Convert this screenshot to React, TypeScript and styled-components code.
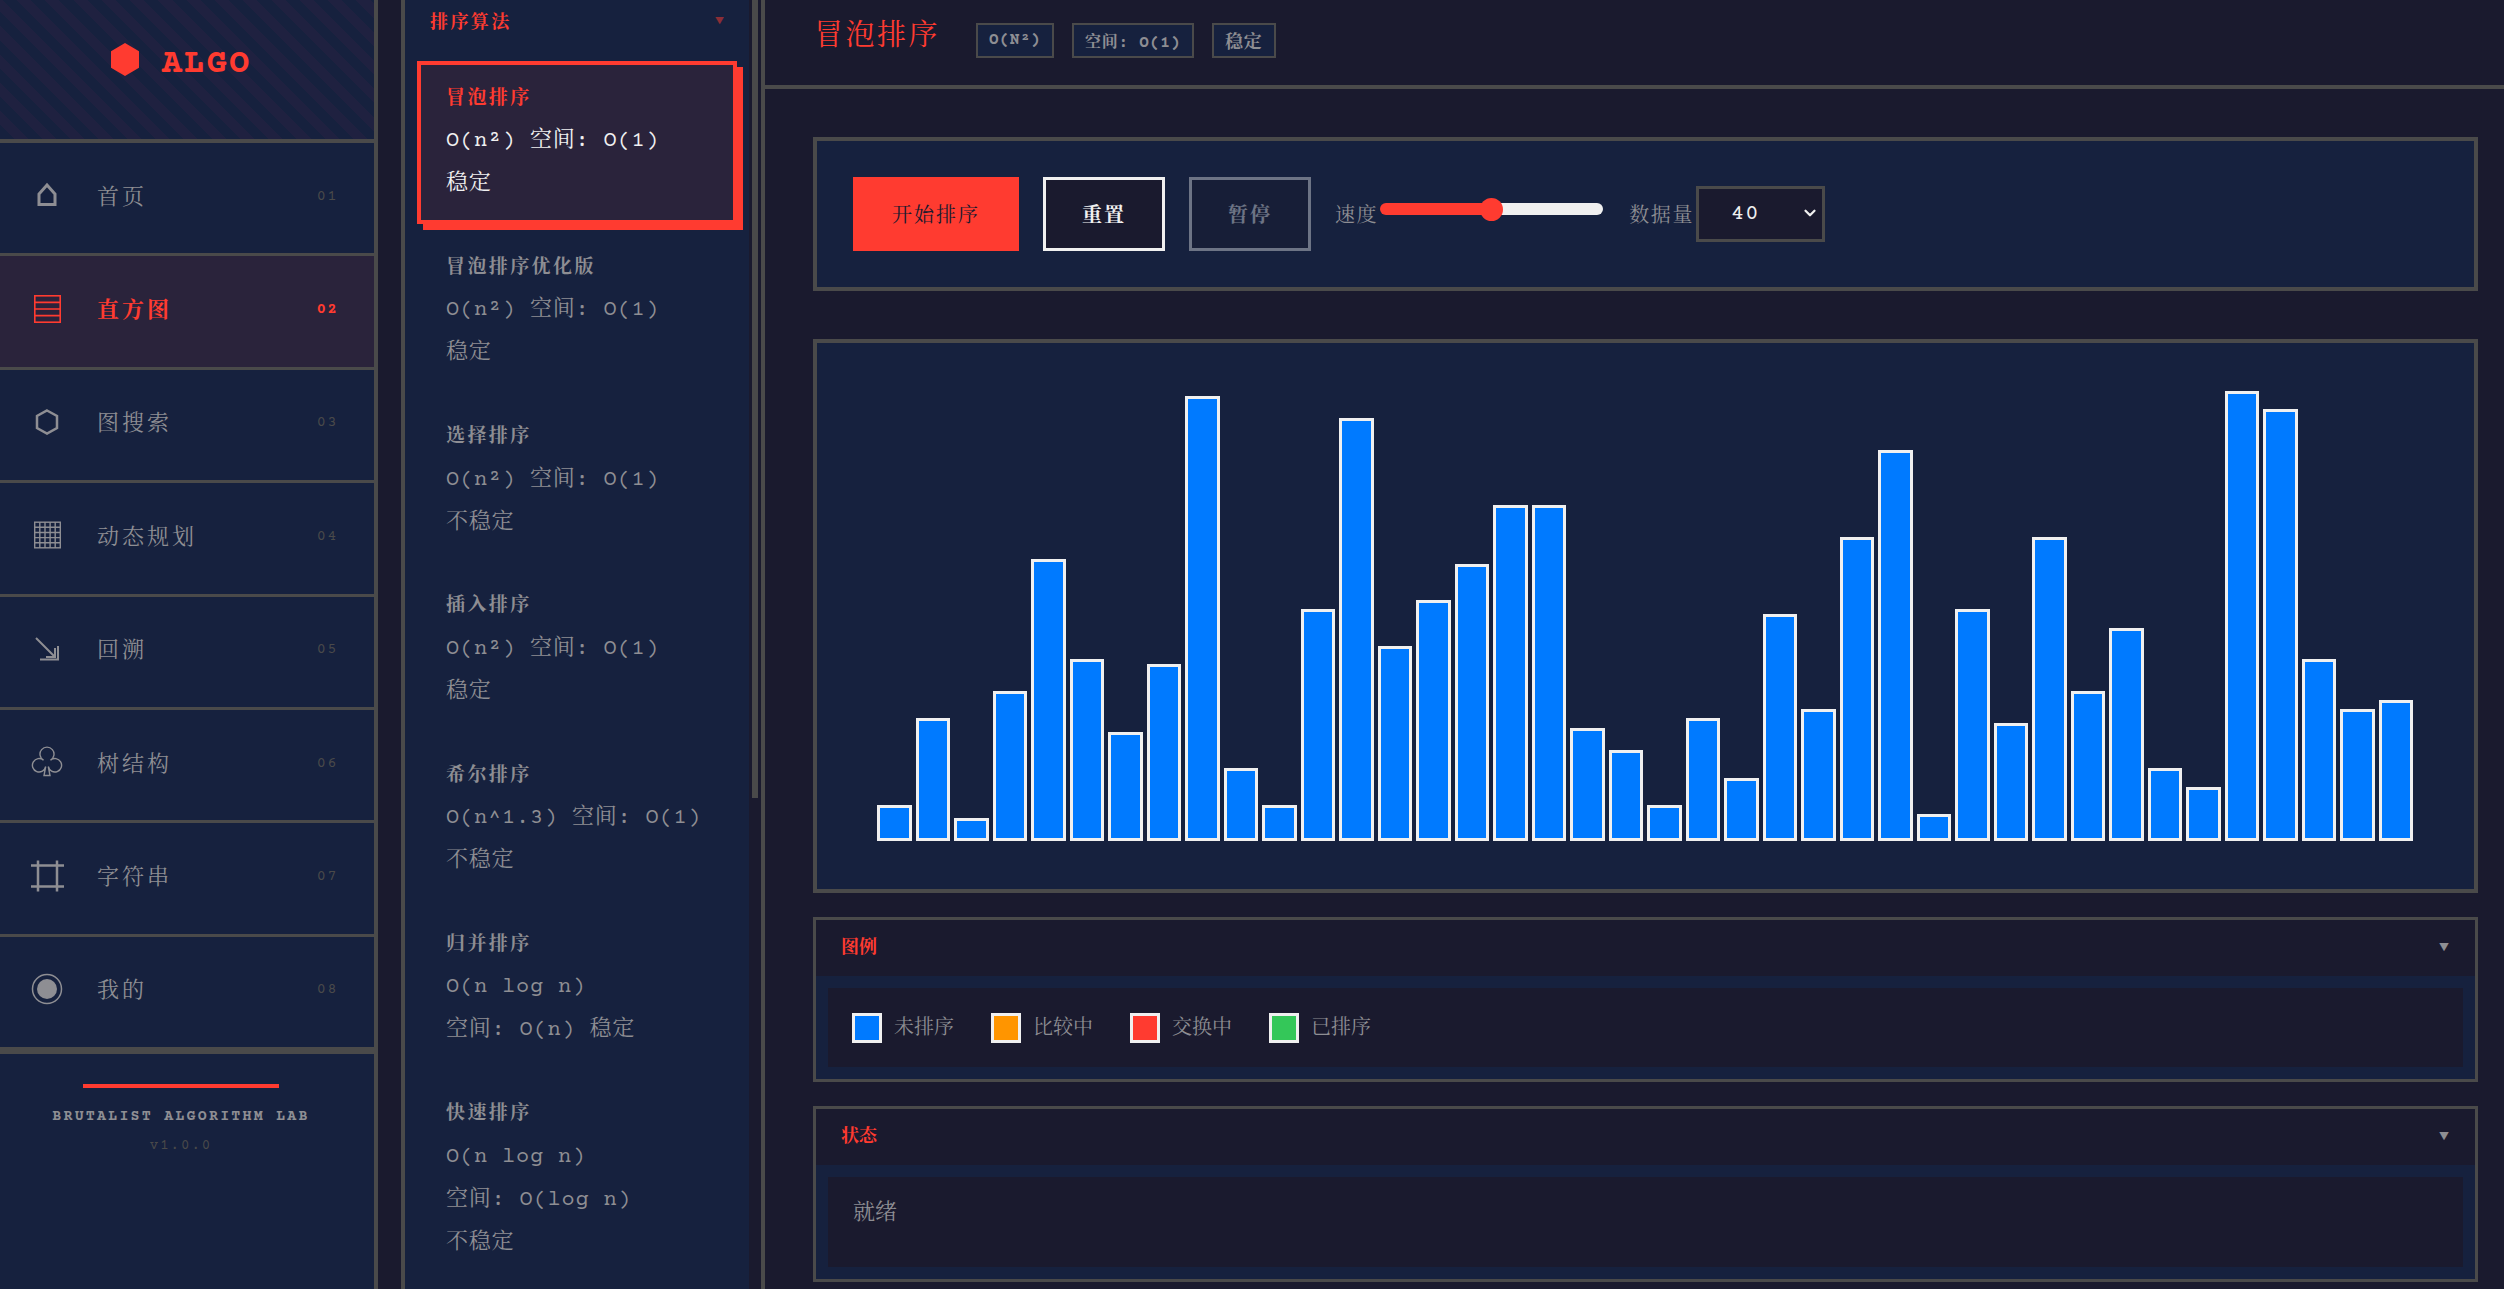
import React from "react";
import styled, { createGlobalStyle } from "styled-components";
import { ChevronDown } from "lucide-react";

const RED = "#ff3b30";
const NAVY = "#16213e";
const DARK = "#1a1a2e";
const LINE = "#4a4a4a";
const GRAY = "#8e8e93";
const WHITE = "#f0f0f0";

const GlobalStyle = createGlobalStyle`
  html, body {
    margin: 0;
    height: 100%;
    overflow: hidden;
    background: ${DARK};
  }
  * {
    box-sizing: border-box;
  }
`;

const Page = styled.div`
  display: flex;
  height: 100vh;
  font-family: "Courier Prime", "Noto Serif CJK SC", monospace;
  color: ${WHITE};
  background: ${DARK};
`;

const Sidebar = styled.aside`
  width: 378px;
  flex-shrink: 0;
  display: flex;
  flex-direction: column;
  background: ${NAVY};
  border-right: 4px solid ${LINE};
`;

const LogoBox = styled.div`
  height: 143px;
  padding: 0 12px 10px 0;
  display: flex;
  align-items: center;
  justify-content: center;
  gap: 23px;
  border-bottom: 4px solid ${LINE};
  background: repeating-linear-gradient(
    45deg,
    ${NAVY},
    ${NAVY} 10px,
    #1f2140 10px,
    #1f2140 20px
  );
`;

const LogoMark = styled.svg`
  width: 28px;
  height: 33px;
  margin-top: -10px;
  fill: ${RED};
`;

const LogoText = styled.span`
  font-size: 34px;
  font-weight: 700;
  letter-spacing: 2px;
  color: ${RED};
`;

const NavList = styled.nav`
  display: flex;
  flex-direction: column;
`;

const NavItem = styled.a<{ $active?: boolean }>`
  height: 113.4px;
  display: flex;
  align-items: center;
  padding: 0 36px 6px 24px;
  border-bottom: 3px solid ${LINE};
  color: ${(p) => (p.$active ? RED : GRAY)};
  background: ${(p) => (p.$active ? "#2a233b" : "transparent")};
  font-weight: ${(p) => (p.$active ? 700 : 400)};
  cursor: pointer;
`;

const NavGlyph = styled.svg`
  width: 46px;
  height: 46px;
  margin-right: 27px;
  flex-shrink: 0;
  fill: none;
  stroke: currentColor;
`;

const NavLabel = styled.span`
  flex: 1;
  font-size: 22px;
  letter-spacing: 3px;
`;

const NavNumber = styled.span<{ $active?: boolean }>`
  margin-top: 2px;
  font-size: 15px;
  letter-spacing: 1.6px;
  color: ${(p) => (p.$active ? RED : LINE)};
`;

const SideFooter = styled.div`
  flex: 1;
  padding: 30px 36px 0 24px;
  display: flex;
  flex-direction: column;
  align-items: center;
  border-top: 4px solid ${LINE};
`;

const FooterBar = styled.div`
  width: 196px;
  height: 4px;
  background: ${RED};
  margin-bottom: 20px;
`;

const FooterTitle = styled.div`
  font-size: 15px;
  font-weight: 700;
  letter-spacing: 2.2px;
  white-space: nowrap;
  color: ${GRAY};
  margin-bottom: 13px;
`;

const FooterVersion = styled.div`
  font-size: 14px;
  letter-spacing: 2px;
  color: ${LINE};
`;

const AlgoPanel = styled.section`
  position: relative;
  width: 360px;
  flex-shrink: 0;
  margin-left: 23px;
  padding-right: 12px;
  border-left: 4px solid ${LINE};
  background: ${NAVY};
  overflow: hidden;
`;

// drawn by hand: the headless browser hides real scrollbars
const ScrollTrack = styled.div`
  position: absolute;
  top: 0;
  right: 0;
  bottom: 0;
  width: 12px;
  padding: 0 3px;
  background: ${DARK};
`;

const ScrollThumb = styled.div`
  height: 798px;
  background: ${LINE};
`;

const GroupHeader = styled.div`
  height: 40px;
  margin-bottom: 21px;
  display: flex;
  align-items: center;
  justify-content: space-between;
  padding: 0 25px 0 25px;
  font-size: 18px;
  font-weight: 700;
  letter-spacing: 2.4px;
  color: ${RED};
`;

const GroupArrow = styled.span`
  font-size: 9px;
  letter-spacing: 0;
  opacity: 0.5;
`;

const AlgoList = styled.div`
  display: flex;
  flex-direction: column;
  gap: 6px;
  padding: 0 12px;
`;

const AlgoItem = styled.div<{ $active?: boolean }>`
  padding: 19.5px 23px 14.3px 25px;
  border: 4px solid ${(p) => (p.$active ? RED : "transparent")};
  background: ${(p) => (p.$active ? "#2a233b" : "transparent")};
  box-shadow: ${(p) => (p.$active ? `6px 6px 0 ${RED}` : "none")};
  cursor: pointer;
`;

const AlgoName = styled.div<{ $active?: boolean }>`
  height: 30.3px;
  line-height: 30.3px;
  margin-bottom: 5.2px;
  font-size: 19px;
  font-weight: 700;
  letter-spacing: 2.4px;
  color: ${(p) => (p.$active ? RED : GRAY)};
`;

const AlgoMeta = styled.div<{ $active?: boolean }>`
  font-size: 22px;
  letter-spacing: 0.8px;
  line-height: 43px;
  color: ${(p) => (p.$active ? WHITE : GRAY)};

  span {
    white-space: nowrap;
  }
`;

const Main = styled.main`
  flex: 1;
  min-width: 0;
  border-left: 4px solid ${LINE};
  display: flex;
  flex-direction: column;
`;

const TopBar = styled.header`
  height: 89px;
  flex-shrink: 0;
  display: flex;
  align-items: center;
  gap: 18px;
  padding: 0 47px 5px 49px;
  border-bottom: 4px solid ${LINE};
`;

const Title = styled.h1`
  margin: 0 18px 13px 0;
  font-size: 29px;
  font-weight: 400;
  letter-spacing: 2.5px;
  color: ${RED};
`;

const Tag = styled.span<{ $large?: boolean }>`
  height: 35px;
  display: flex;
  align-items: center;
  padding: 0 11px;
  border: 2px solid ${LINE};
  background: ${NAVY};
  font-size: ${(p) => (p.$large ? "18px" : "16px")};
  font-weight: 700;
  letter-spacing: 0.8px;
  text-transform: uppercase;
  color: ${GRAY};
`;

const Content = styled.div`
  display: flex;
  flex-direction: column;
  padding: 48px 26px 0 48px;
`;

const ControlPanel = styled.div`
  height: 154px;
  margin-bottom: 48px;
  display: flex;
  align-items: center;
  gap: 24px;
  padding: 0 36px;
  border: 4px solid ${LINE};
  background: ${NAVY};
`;

const Button = styled.button<{ $primary?: boolean }>`
  height: 74px;
  padding: 0 36px;
  border: 3px solid ${(p) => (p.$primary ? RED : WHITE)};
  background: ${(p) => (p.$primary ? RED : DARK)};
  color: ${(p) => (p.$primary ? DARK : WHITE)};
  font-family: inherit;
  font-size: 20px;
  font-weight: ${(p) => (p.$primary ? 400 : 700)};
  letter-spacing: 2px;
  cursor: pointer;

  &:disabled {
    opacity: 0.4;
    cursor: default;
  }
`;

const ControlGroup = styled.label`
  display: flex;
  align-items: center;
  gap: 2px;
  font-size: 20px;
  letter-spacing: 1.6px;
  color: ${GRAY};
`;

const Slider = styled.input`
  -webkit-appearance: none;
  appearance: none;
  width: 223px;
  height: 24px;
  margin: -10px 2px 0 0;
  background: transparent;

  &::-webkit-slider-runnable-track {
    height: 12px;
    border-radius: 6px;
    background: linear-gradient(to right, ${RED} 49%, ${WHITE} 49%);
  }
  &::-webkit-slider-thumb {
    -webkit-appearance: none;
    width: 23px;
    height: 23px;
    margin-top: -5.5px;
    border-radius: 50%;
    background: ${RED};
  }
`;

const SelectWrap = styled.div`
  position: relative;
  width: 129px;
  height: 56px;
`;

const Select = styled.select`
  -webkit-appearance: none;
  appearance: none;
  width: 100%;
  height: 100%;
  padding-left: 32px;
  border: 3px solid ${LINE};
  border-radius: 0;
  background: ${DARK};
  color: ${WHITE};
  font-family: inherit;
  font-size: 22px;
  letter-spacing: 1px;
`;

const SelectChevron = styled(ChevronDown)`
  position: absolute;
  right: 6px;
  top: 18px;
  width: 18px;
  height: 18px;
  color: ${WHITE};
  pointer-events: none;
`;

const ChartPanel = styled.div`
  height: 554px;
  margin-bottom: 24px;
  display: flex;
  align-items: flex-end;
  gap: 4px;
  padding: 48px 61px 48px 60px;
  border: 4px solid ${LINE};
  background: ${NAVY};
`;

const Bar = styled.div`
  flex: 1;
  border: 3px solid ${WHITE};
  background: #007aff;
`;

const Fold = styled.div<{ $last?: boolean }>`
  margin-bottom: ${(p) => (p.$last ? 0 : "24px")};
  border: 3px solid ${LINE};
  background: ${NAVY};
`;

const FoldHeader = styled.div`
  height: 56px;
  display: flex;
  align-items: center;
  justify-content: space-between;
  padding: 0 26px 6px 25px;
  background: ${DARK};
  font-size: 18px;
  font-weight: 700;
  color: ${RED};
`;

const FoldArrow = styled.span`
  margin-top: 3px;
  font-size: 10px;
  font-weight: 400;
  color: ${GRAY};
`;

const FoldBody = styled.div`
  padding: 12px;
`;

const LegendRow = styled.div`
  height: 79px;
  display: flex;
  align-items: center;
  gap: 36px;
  padding: 0 24px;
  background: ${DARK};
`;

const LegendItem = styled.div`
  display: flex;
  align-items: center;
  gap: 12px;
  font-size: 20px;
  color: ${GRAY};
`;

const LegendLabel = styled.span`
  margin: 0 1px 4px 0;
`;

const Swatch = styled.span<{ $color: string }>`
  width: 30px;
  height: 30px;
  border: 3px solid ${WHITE};
  background: ${(p) => p.$color};
`;

const StatusBox = styled.div`
  height: 90px;
  padding: 17px 25px 0;
  background: ${DARK};
  font-size: 22px;
  line-height: 42px;
  color: ${GRAY};
`;

const NAV = [
  {
    label: "首页",
    glyph: <polygon points="23,13 31,22 31,32.5 15,32.5 15,22" strokeWidth={3} />,
  },
  {
    label: "直方图",
    active: true,
    glyph: (
      <g strokeWidth={1.6}>
        <rect x={10.8} y={9.8} width={25.4} height={26.4} />
        <path d="M11 16.4H36M11 23H36M11 29.6H36" />
      </g>
    ),
  },
  {
    label: "图搜索",
    glyph: <polygon points="23,11.5 33,17 33,29 23,34.5 13,29 13,17" strokeWidth={2.5} />,
  },
  {
    label: "动态规划",
    glyph: (
      <g strokeWidth={1.4}>
        <rect x={10.7} y={10.2} width={25.6} height={25.6} />
        <path d="M15.8 10V36M21 10V36M26.1 10V36M31.2 10V36M11 15.3H36M11 20.5H36M11 25.6H36M11 30.7H36" />
      </g>
    ),
  },
  {
    label: "回溯",
    glyph: <path d="M12 12L31 31M31 22V31H22M16 33.5H34V20" strokeWidth={2} />,
  },
  {
    label: "树结构",
    glyph: (
      <path
        d="M19.5 21.2A7 7 0 1 1 26.5 21.2A6.7 6.7 0 1 1 24.3 27.5L26 36.5H20L21.7 27.5A6.7 6.7 0 1 1 19.5 21.2Z"
        strokeWidth={1.4}
      />
    ),
  },
  {
    label: "字符串",
    glyph: <path d="M14 7.5V38.5M33 7.5V38.5M7 12.5H40M7 33.5H40" strokeWidth={2.5} />,
  },
  {
    label: "我的",
    glyph: (
      <g>
        <circle cx={23} cy={23} r={14.5} strokeWidth={1.5} />
        <circle cx={23} cy={23} r={10} fill="currentColor" stroke="none" />
      </g>
    ),
  },
];

const ALGOS = [
  { name: "冒泡排序", time: "O(n²)", space: "O(1)", stable: "稳定", active: true },
  { name: "冒泡排序优化版", time: "O(n²)", space: "O(1)", stable: "稳定" },
  { name: "选择排序", time: "O(n²)", space: "O(1)", stable: "不稳定" },
  { name: "插入排序", time: "O(n²)", space: "O(1)", stable: "稳定" },
  { name: "希尔排序", time: "O(n^1.3)", space: "O(1)", stable: "不稳定" },
  { name: "归并排序", time: "O(n log n)", space: "O(n)", stable: "稳定" },
  { name: "快速排序", time: "O(n log n)", space: "O(log n)", stable: "不稳定" },
];

const BARS = [
  36, 123, 23, 150, 282, 182, 109, 177, 445, 73, 36, 232, 423, 195, 241, 277, 336, 336, 113, 91,
  36, 123, 63, 227, 132, 304, 391, 27, 232, 118, 304, 150, 213, 73, 54, 450, 432, 182, 132, 141,
];

const LEGEND = [
  { color: "#007aff", label: "未排序" },
  { color: "#ff9500", label: "比较中" },
  { color: RED, label: "交换中" },
  { color: "#34c759", label: "已排序" },
];

export default function App() {
  return (
    <Page>
      <GlobalStyle />
      <Sidebar>
        <LogoBox>
          <LogoMark viewBox="0 0 28 33">
            <polygon points="14,0 28,8.25 28,24.75 14,33 0,24.75 0,8.25" />
          </LogoMark>
          <LogoText>ALGO</LogoText>
        </LogoBox>
        <NavList>
          {NAV.map((item, i) => (
            <NavItem key={item.label} $active={item.active}>
              <NavGlyph viewBox="0 0 46 46">{item.glyph}</NavGlyph>
              <NavLabel>{item.label}</NavLabel>
              <NavNumber $active={item.active}>0{i + 1}</NavNumber>
            </NavItem>
          ))}
        </NavList>
        <SideFooter>
          <FooterBar />
          <FooterTitle>BRUTALIST ALGORITHM LAB</FooterTitle>
          <FooterVersion>v1.0.0</FooterVersion>
        </SideFooter>
      </Sidebar>

      <AlgoPanel>
        <GroupHeader>
          排序算法
          <GroupArrow>▼</GroupArrow>
        </GroupHeader>
        <AlgoList>
          {ALGOS.map((algo) => (
            <AlgoItem key={algo.name} $active={algo.active}>
              <AlgoName $active={algo.active}>{algo.name}</AlgoName>
              <AlgoMeta $active={algo.active}>
                <span>{algo.time}</span> <span>空间: {algo.space}</span> <span>{algo.stable}</span>
              </AlgoMeta>
            </AlgoItem>
          ))}
        </AlgoList>
        <ScrollTrack>
          <ScrollThumb />
        </ScrollTrack>
      </AlgoPanel>

      <Main>
        <TopBar>
          <Title>冒泡排序</Title>
          <Tag>O(n²)</Tag>
          <Tag>空间: O(1)</Tag>
          <Tag $large>稳定</Tag>
        </TopBar>
        <Content>
          <ControlPanel>
            <Button $primary>开始排序</Button>
            <Button>重置</Button>
            <Button disabled>暂停</Button>
            <ControlGroup>
              速度
              <Slider type="range" min={0} max={100} defaultValue={50} />
            </ControlGroup>
            <ControlGroup>
              数据量
              <SelectWrap>
                <Select defaultValue="40">
                  <option value="20">20</option>
                  <option value="40">40</option>
                  <option value="60">60</option>
                </Select>
                <SelectChevron strokeWidth={3} />
              </SelectWrap>
            </ControlGroup>
          </ControlPanel>

          <ChartPanel>
            {BARS.map((h, i) => (
              <Bar key={i} style={{ height: h }} />
            ))}
          </ChartPanel>

          <Fold>
            <FoldHeader>
              图例
              <FoldArrow>▼</FoldArrow>
            </FoldHeader>
            <FoldBody>
              <LegendRow>
                {LEGEND.map((item) => (
                  <LegendItem key={item.label}>
                    <Swatch $color={item.color} />
                    <LegendLabel>{item.label}</LegendLabel>
                  </LegendItem>
                ))}
              </LegendRow>
            </FoldBody>
          </Fold>

          <Fold $last>
            <FoldHeader>
              状态
              <FoldArrow>▼</FoldArrow>
            </FoldHeader>
            <FoldBody>
              <StatusBox>就绪</StatusBox>
            </FoldBody>
          </Fold>
        </Content>
      </Main>
    </Page>
  );
}
